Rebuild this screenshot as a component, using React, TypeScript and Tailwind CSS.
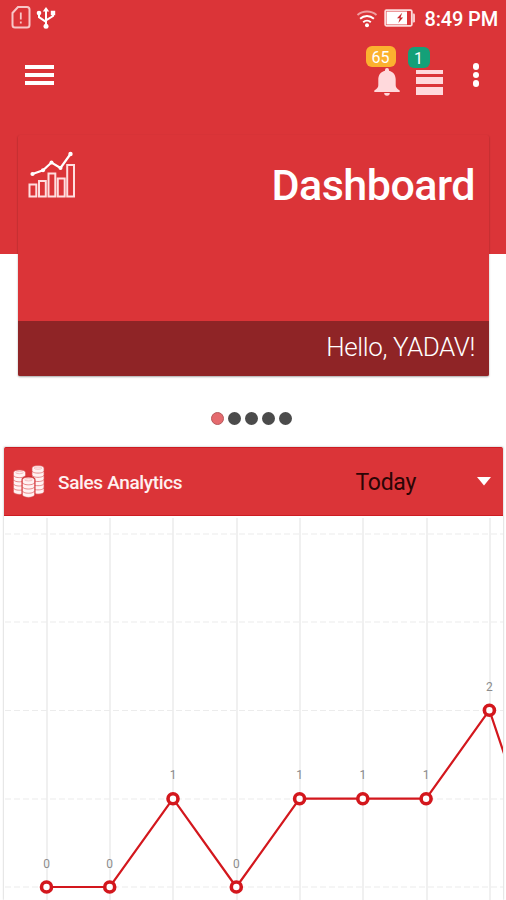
import React from 'react';

const GRID_X = [47, 110, 173, 237, 300, 363, 427, 490];
const GRID_Y = [534, 622, 710.5, 799, 887];

const sales = [
  { x: 46.5, y: 887, value: 0 },
  { x: 109.7, y: 887, value: 0 },
  { x: 173, y: 798.7, value: 1 },
  { x: 236.3, y: 887, value: 0 },
  { x: 299.6, y: 798.7, value: 1 },
  { x: 362.8, y: 798.7, value: 1 },
  { x: 426.1, y: 798.7, value: 1 },
  { x: 489.4, y: 710.2, value: 2 },
];

function SimIcon() {
  return (
    <svg width="20" height="24" viewBox="0 0 20 24" fill="none" stroke="#f8c6c7" strokeWidth="2">
      <path d="M7 2H16a2.5 2.500 0 0 1 2.500 2.500V20a2.500 2.500 0 0 1-2.500 2.500H4a2.500 2.500 0 0 1-2.500-2.500V8Z" />
      <path d="M9.800 7.500V14.500M9.800 16.500V18.500" strokeWidth="1.800" />
    </svg>
  );
}

function UsbIcon() {
  return (
    <svg width="20" height="24" viewBox="0 0 20 24" fill="none" stroke="#fff" strokeWidth="2">
      <path d="M10 5V21M3 8V12.200L10 16.800M17 8V11L10 15.400" />
      <path d="M6.800 6.500 10 2 13.200 6.500Z" fill="#fff" stroke="none" />
      <circle cx="3" cy="8" r="2.300" fill="#fff" stroke="none" />
      <circle cx="10" cy="21.300" r="2.500" fill="#fff" stroke="none" />
      <path d="M14.800 5.700h4.400v4.600h-4.400z" fill="#fff" stroke="none" />
    </svg>
  );
}

function WifiIcon() {
  return (
    <svg width="22" height="18" viewBox="0 0 22 18" fill="none" strokeWidth="1.9">
      <path d="M1.500 5a14.500 14.500 0 0 1 19 0" stroke="#ee9ea0" />
      <path d="M4.100 8.800a10 10 0 0 1 13.800 0" stroke="#fff" />
      <path d="M7.200 12.300a5.600 5.600 0 0 1 7.600 0" stroke="#fff" />
      <circle cx="11" cy="15.200" r="2" fill="#fff" />
    </svg>
  );
}

function BatteryIcon() {
  return (
    <svg width="32" height="18" viewBox="0 0 32 18">
      <rect x="1.2" y="1.2" width="26.6" height="15.6" rx="1.2" fill="none" stroke="#fbdcdc" strokeWidth="1.8" />
      <path d="M28.5 4.5h1.3a1.2 1.2 0 0 1 1.2 1.2v6.6a1.2 1.2 0 0 1-1.2 1.2h-1.3" fill="#f8c6c7" />
      <rect x="2.500" y="2.500" width="20.500" height="13" fill="#fff" />
      <path d="M18.200 3.800 13 9.200h2.800L14.300 14l4.800-5.600h-2.600Z" fill="#c9282c" />
    </svg>
  );
}

function BellIcon() {
  return (
    <svg width="26" height="28" viewBox="0 0 26 28" fill="#ffd9dc">
      <path d="M13 0a2 2 0 0 1 2 2v.700c4.300 1 6.700 4.400 6.700 8.800v5.800c0 1.900 1.300 3.600 4 5.200v1.500H.3v-1.500c2.700-1.600 4-3.300 4-5.200V11.500C4.300 7.100 6.700 3.700 11 2.700V2a2 2 0 0 1 2-2Z" />
      <path d="M10.200 25h5.600a2.800 2.800 0 0 1-5.600 0Z" />
    </svg>
  );
}

function GrowthIcon() {
  return (
    <svg width="48" height="48" viewBox="0 0 48 48" fill="none" stroke="#ffdedf" strokeWidth="2">
      <path d="M1.500 33.500h6.800v12H1.500zM11 30h6.800v15.500H11zM20.500 22.500h6.800v23h-6.800zM29.800 27.500h6.900v18h-6.900zM39.200 14H46v31.500h-6.800z" />
      <path d="M4.500 23 15 19.200 23.500 11.500 32.500 17 42.500 3" stroke="#fff" strokeWidth="2.200" />
      <g fill="#fff" stroke="none">
        <circle cx="4.500" cy="23" r="2.100" />
        <circle cx="15" cy="19.200" r="2" />
        <circle cx="23.500" cy="11.500" r="2" />
        <circle cx="32.500" cy="17" r="2" />
        <circle cx="42.500" cy="3" r="2.200" />
      </g>
    </svg>
  );
}

function CoinStack({ x, top, count }: { x: number; top: number; count: number }) {
  return (
    <g>
      {Array.from({ length: count }, (_, i) => count - 1 - i).map(i => (
        <path
          key={i}
          transform={`translate(${x} ${top + i * 4.2})`}
          d="M0 2.800C0 1 2.300 0 6 0s6 1 6 2.800V4.800C12 6.600 9.700 7.600 6 7.600S0 6.600 0 4.800Z"
          fill="#fff2f2"
          stroke="#dd5a5d"
          strokeWidth="0.7"
        />
      ))}
      <ellipse cx={x + 6} cy={top + 2.6} rx="3.8" ry="1.1" fill="none" stroke="#f0a5a7" strokeWidth="0.7" />
    </g>
  );
}

function CoinsIcon() {
  return (
    <svg width="32" height="33" viewBox="0 0 32 33">
      <CoinStack x={0.5} top={5} count={5} />
      <CoinStack x={19} top={0.5} count={6} />
      <g stroke="#cf2529">
        <path d="M9 14.500C9 12.500 11.500 11.500 15.500 11.500s6.500 1 6.500 3V29.500c0 2-2.500 3-6.500 3S9 31.500 9 29.500Z" fill="#cf2529" />
        <CoinStack x={9.5} top={12.2} count={4} />
      </g>
    </svg>
  );
}

function SalesChart() {
  const line = [...sales, { x: 552.7, y: 898, value: 0 }].map(p => `${p.x},${p.y}`).join(' ');
  return (
    <svg className="block" width="499" height="384" viewBox="4 516 499 384">
      {GRID_X.map(x => (
        <path key={x} d={`M${x} 518V900`} stroke="#eeeeee" strokeWidth="1.7" />
      ))}
      {GRID_Y.map(y => (
        <path key={y} d={`M5 ${y}H503`} stroke="#ececec" strokeWidth="1.2" strokeDasharray="6 3" />
      ))}
      <polyline points={line} fill="none" stroke="#d3171d" strokeWidth="2.200" />
      {sales.map(p => (
        <g key={p.x}>
          <circle cx={p.x} cy={p.y} r="5" fill="#fff" stroke="#d3171d" strokeWidth="3.600" />
          <text x={p.x} y={p.y - 19.5} textAnchor="middle" fontSize="12" fill="#8c8c8c">{p.value}</text>
        </g>
      ))}
    </svg>
  );
}

export default function App() {
  return (
    <div className="w-[506px] h-[900px] overflow-hidden bg-white font-['Roboto',sans-serif]">
      <header className="h-[254px] bg-[#db3438] text-white">
        {/* Status bar */}
        <div className="h-9 pl-[11px] pr-2 pt-[5px] flex items-start justify-between">
          <div className="flex items-center gap-[5px]">
            <SimIcon />
            <UsbIcon />
          </div>
          <div className="flex items-center pt-px">
            <WifiIcon />
            <div className="-mt-[2px] ml-[6px] mr-2"><BatteryIcon /></div>
            <span className="text-[20px] leading-[26px] font-medium tracking-[-0.15px] whitespace-nowrap">8:49 PM</span>
          </div>
        </div>

        {/* Toolbar */}
        <div className="h-[78px] pl-[25px] pr-[27px] flex items-center justify-between">
          <button className="flex flex-col gap-[4.500px]">
            <span className="w-[29px] h-[3.500px] bg-white" />
            <span className="w-[29px] h-[3.500px] bg-white" />
            <span className="w-[29px] h-[3.500px] bg-white" />
          </button>
          <div className="flex items-center">
            <button className="relative mt-[14px]">
              <BellIcon />
              <span className="absolute -left-2 -top-[22px] w-[30px] h-[21px] rounded-[6px] bg-[#fcb12f] text-[16px] leading-[23px] text-center">65</span>
            </button>
            <button className="relative ml-4 mt-[14px] flex flex-col gap-[3px]">
              <span className="w-[27px] h-1 bg-[#ffd9dc]" />
              <span className="w-[27px] h-[7px] bg-[#ffd9dc]" />
              <span className="w-[27px] h-2 bg-[#ffd9dc]" />
              <span className="absolute -left-2 -top-[23px] w-[22px] h-[21px] rounded-[6px] bg-[#14a078] text-[16px] leading-[23px] text-center">1</span>
            </button>
            <button className="ml-[30px] flex flex-col gap-[2px]">
              <span className="size-[6.500px] rounded-full bg-white" />
              <span className="size-[6.500px] rounded-full bg-white" />
              <span className="size-[6.500px] rounded-full bg-white" />
            </button>
          </div>
        </div>
      </header>

      {/* Welcome card */}
      <section className="relative -mt-[119px] mx-[18px] w-[471px] h-[241px] rounded-[2px] overflow-hidden bg-[#db3438] text-white shadow-[0_1px_2px_rgba(0,0,0,0.35)] flex flex-col justify-between">
        <div className="flex justify-between pl-[10px] pr-[14px] pt-4">
          <GrowthIcon />
          <h1 className="mt-[9px] text-[43px] leading-[50px] font-medium tracking-[-0.5px]">Dashboard</h1>
        </div>
        <div className="h-[55px] bg-[#8f2426] pr-[14px] text-right text-[26px] leading-[52px] font-light tracking-[-0.4px]">Hello, YADAV!</div>
      </section>

      {/* Pager */}
      <div className="mt-[35.500px] flex justify-center gap-1 pr-1">
        <span className="size-[13px] rounded-full bg-[#e56a6e] border border-[#b5595c]" />
        {[1, 2, 3, 4].map(i => (
          <span key={i} className="size-[13px] rounded-full bg-[#4b4b4b]" />
        ))}
      </div>

      {/* Sales panel */}
      <section className="mt-[22.500px] ml-1 w-[499px] shadow-[0_0_2px_rgba(0,0,0,0.3)]">
        <div className="h-[69px] pl-[9px] pr-3 flex items-center rounded-t-[2px] bg-[#db3438] border-y border-[#cd1c22]">
          <CoinsIcon />
          <h2 className="ml-[13px] mt-[3px] text-[19px] font-medium tracking-[-0.35px] text-[#fff0f0] whitespace-nowrap">Sales Analytics</h2>
          <button className="ml-auto flex items-center text-[23px] tracking-[-0.3px] text-[#2b0505]">
            <span className="mt-[3px]">Today</span>
            <svg className="ml-[61px]" width="14" height="9" viewBox="0 0 14 9" fill="#fff"><path d="M0 0H14L7 8.500Z" /></svg>
          </button>
        </div>
        <SalesChart />
      </section>
    </div>
  );
}
